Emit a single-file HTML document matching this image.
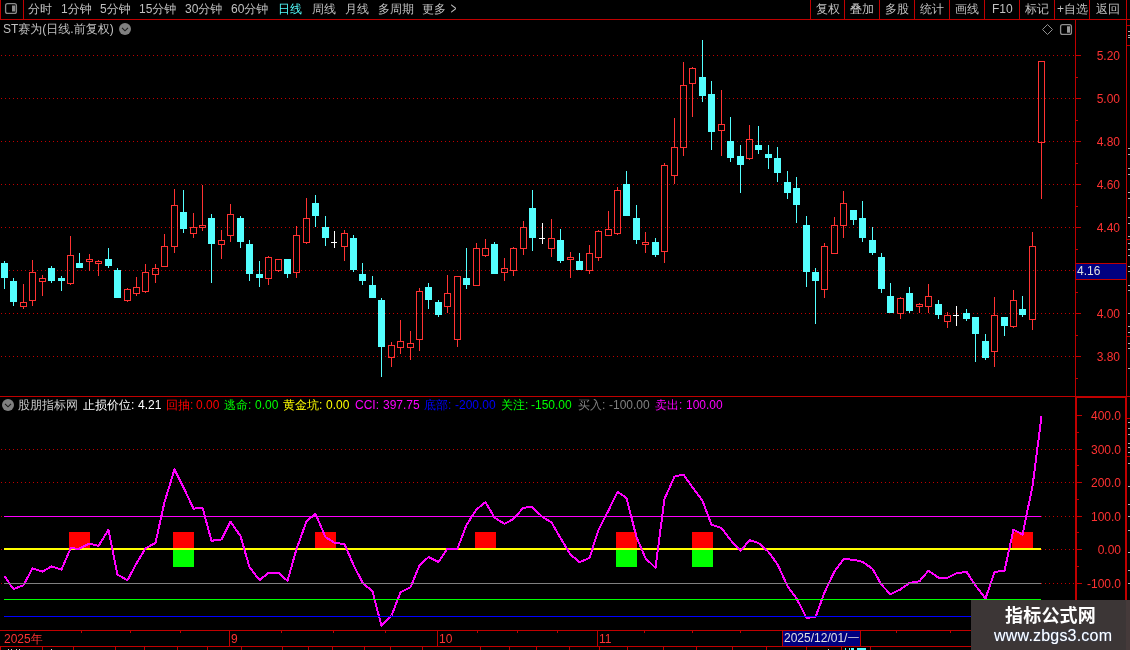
<!DOCTYPE html>
<html lang="zh-CN"><head><meta charset="utf-8"><title>ST赛为 日线</title>
<style>
html,body{margin:0;padding:0;background:#000;}
#w{will-change:transform;position:relative;width:1130px;height:650px;overflow:hidden;background:#000;font-family:"Liberation Sans","WenQuanYi Zen Hei","Noto Sans CJK SC",sans-serif;}
.t{position:absolute;font-size:12px;line-height:16px;white-space:nowrap;letter-spacing:0;}
.r{text-align:right;}
#wm{position:absolute;left:971px;top:600px;width:159px;height:50px;background:#3c3636;font-family:"Liberation Sans","Noto Sans CJK SC",sans-serif;}
#wm .a{position:absolute;left:0;width:159px;top:3px;text-align:center;color:#fff;font-weight:bold;font-size:18px;line-height:26px;letter-spacing:0.2px;}
#wm .c{position:absolute;left:155px;top:0;width:4px;height:50px;background:#453a3a;}
#wm .b{position:absolute;left:23px;top:26px;color:#fff;font-size:16px;line-height:20px;letter-spacing:0.2px;text-shadow:0 0 1px rgba(90,143,224,.85);}
</style></head><body><div id="w">
<svg width="1130" height="650" viewBox="0 0 1130 650" style="position:absolute;left:0;top:0" shape-rendering="crispEdges">
<line x1="1" y1="55.5" x2="1075" y2="55.5" stroke="#c00000" stroke-width="1" stroke-dasharray="1 3"/>
<line x1="1" y1="98.5" x2="1075" y2="98.5" stroke="#c00000" stroke-width="1" stroke-dasharray="1 3"/>
<line x1="1" y1="141.5" x2="1075" y2="141.5" stroke="#c00000" stroke-width="1" stroke-dasharray="1 3"/>
<line x1="1" y1="184.5" x2="1075" y2="184.5" stroke="#c00000" stroke-width="1" stroke-dasharray="1 3"/>
<line x1="1" y1="227.5" x2="1075" y2="227.5" stroke="#c00000" stroke-width="1" stroke-dasharray="1 3"/>
<line x1="1" y1="270.5" x2="1075" y2="270.5" stroke="#c00000" stroke-width="1" stroke-dasharray="1 3"/>
<line x1="1" y1="313.5" x2="1075" y2="313.5" stroke="#c00000" stroke-width="1" stroke-dasharray="1 3"/>
<line x1="1" y1="356.5" x2="1075" y2="356.5" stroke="#c00000" stroke-width="1" stroke-dasharray="1 3"/>
<line x1="1" y1="449.5" x2="1075" y2="449.5" stroke="#c00000" stroke-width="1" stroke-dasharray="1 3"/>
<line x1="1" y1="482.5" x2="1075" y2="482.5" stroke="#c00000" stroke-width="1" stroke-dasharray="1 3"/>
<line x1="1" y1="516.5" x2="1075" y2="516.5" stroke="#c00000" stroke-width="1" stroke-dasharray="1 3"/>
<line x1="1" y1="549.5" x2="1075" y2="549.5" stroke="#c00000" stroke-width="1" stroke-dasharray="1 3"/>
<line x1="1" y1="583.5" x2="1075" y2="583.5" stroke="#c00000" stroke-width="1" stroke-dasharray="1 3"/>
<rect x="0" y="0" width="1" height="20" fill="#c00000"/>
<rect x="23" y="0" width="1" height="20" fill="#c00000"/>
<rect x="0" y="19" width="1130" height="1" fill="#c00000"/>
<rect x="810" y="0" width="1" height="20" fill="#c00000"/>
<rect x="844" y="0" width="1" height="20" fill="#c00000"/>
<rect x="879" y="0" width="1" height="20" fill="#c00000"/>
<rect x="914" y="0" width="1" height="20" fill="#c00000"/>
<rect x="949" y="0" width="1" height="20" fill="#c00000"/>
<rect x="984" y="0" width="1" height="20" fill="#c00000"/>
<rect x="1019" y="0" width="1" height="20" fill="#c00000"/>
<rect x="1054" y="0" width="1" height="20" fill="#c00000"/>
<rect x="1089" y="0" width="1" height="20" fill="#c00000"/>
<rect x="1126" y="0" width="1" height="396" fill="#c00000"/>
<rect x="1075" y="19" width="1" height="378" fill="#c00000"/>
<rect x="0" y="396" width="1130" height="1" fill="#c00000"/>
<rect x="1075" y="397" width="52" height="1" fill="#c00000"/>
<rect x="1075" y="396" width="2" height="251" fill="#c00000"/>
<rect x="1125" y="396" width="2" height="254" fill="#c00000"/>
<rect x="0" y="630" width="1077" height="1" fill="#c00000"/>
<rect x="0" y="646" width="1130" height="1" fill="#c00000"/>
<rect x="229" y="630" width="1" height="16" fill="#c00000"/>
<rect x="437" y="630" width="1" height="16" fill="#c00000"/>
<rect x="597" y="630" width="1" height="16" fill="#c00000"/>
<rect x="81" y="630" width="1" height="3" fill="#c00000"/>
<rect x="130" y="630" width="1" height="3" fill="#c00000"/>
<rect x="180" y="630" width="1" height="3" fill="#c00000"/>
<rect x="281" y="630" width="1" height="3" fill="#c00000"/>
<rect x="333" y="630" width="1" height="3" fill="#c00000"/>
<rect x="385" y="630" width="1" height="3" fill="#c00000"/>
<rect x="477" y="630" width="1" height="3" fill="#c00000"/>
<rect x="517" y="630" width="1" height="3" fill="#c00000"/>
<rect x="557" y="630" width="1" height="3" fill="#c00000"/>
<rect x="644" y="630" width="1" height="3" fill="#c00000"/>
<rect x="692" y="630" width="1" height="3" fill="#c00000"/>
<rect x="740" y="630" width="1" height="3" fill="#c00000"/>
<rect x="896" y="630" width="1" height="3" fill="#c00000"/>
<rect x="950" y="630" width="1" height="3" fill="#c00000"/>
<rect x="1004" y="630" width="1" height="3" fill="#c00000"/>
<rect x="1041" y="630" width="1" height="3" fill="#c00000"/>
<rect x="0" y="646" width="1" height="4" fill="#c00000"/>
<rect x="42" y="646" width="1" height="4" fill="#c00000"/>
<rect x="73" y="646" width="1" height="4" fill="#c00000"/>
<rect x="115" y="646" width="1" height="4" fill="#c00000"/>
<rect x="144" y="646" width="1" height="4" fill="#c00000"/>
<rect x="177" y="646" width="1" height="4" fill="#c00000"/>
<rect x="207" y="646" width="1" height="4" fill="#c00000"/>
<rect x="241" y="646" width="1" height="4" fill="#c00000"/>
<rect x="282" y="646" width="1" height="4" fill="#c00000"/>
<rect x="308" y="646" width="1" height="4" fill="#c00000"/>
<rect x="332" y="646" width="1" height="4" fill="#c00000"/>
<rect x="364" y="646" width="1" height="4" fill="#c00000"/>
<rect x="390" y="646" width="1" height="4" fill="#c00000"/>
<rect x="422" y="646" width="1" height="4" fill="#c00000"/>
<rect x="480" y="646" width="1" height="4" fill="#c00000"/>
<rect x="509" y="646" width="1" height="4" fill="#c00000"/>
<rect x="536" y="646" width="1" height="4" fill="#c00000"/>
<rect x="569" y="646" width="1" height="4" fill="#c00000"/>
<rect x="599" y="646" width="1" height="4" fill="#c00000"/>
<rect x="627" y="646" width="1" height="4" fill="#c00000"/>
<rect x="663" y="646" width="1" height="4" fill="#c00000"/>
<rect x="696" y="646" width="1" height="4" fill="#c00000"/>
<rect x="732" y="646" width="1" height="4" fill="#c00000"/>
<rect x="766" y="646" width="1" height="4" fill="#c00000"/>
<rect x="806" y="646" width="1" height="4" fill="#c00000"/>
<rect x="841" y="646" width="1" height="4" fill="#c00000"/>
<rect x="870" y="646" width="1" height="4" fill="#c00000"/>
<rect x="8" y="649" width="1" height="1" fill="#d0d0d0"/>
<rect x="11" y="649" width="1" height="1" fill="#d0d0d0"/>
<rect x="16" y="649" width="1" height="1" fill="#d0d0d0"/>
<rect x="19" y="649" width="1" height="1" fill="#d0d0d0"/>
<rect x="51" y="649" width="1" height="1" fill="#d0d0d0"/>
<rect x="828" y="649" width="1" height="1" fill="#d0d0d0"/>
<rect x="845" y="648" width="1" height="2" fill="#54ffff"/>
<rect x="849" y="648" width="1" height="2" fill="#54ffff"/>
<rect x="851" y="648" width="3" height="2" fill="#54ffff"/>
<rect x="857" y="648" width="9" height="2" fill="#54ffff"/>
<rect x="1076" y="55" width="5" height="1" fill="#c00000"/>
<rect x="1076" y="98" width="5" height="1" fill="#c00000"/>
<rect x="1076" y="141" width="5" height="1" fill="#c00000"/>
<rect x="1076" y="184" width="5" height="1" fill="#c00000"/>
<rect x="1076" y="227" width="5" height="1" fill="#c00000"/>
<rect x="1076" y="270" width="5" height="1" fill="#c00000"/>
<rect x="1076" y="313" width="5" height="1" fill="#c00000"/>
<rect x="1076" y="356" width="5" height="1" fill="#c00000"/>
<rect x="1076" y="77" width="2" height="1" fill="#c00000"/>
<rect x="1076" y="120" width="2" height="1" fill="#c00000"/>
<rect x="1076" y="163" width="2" height="1" fill="#c00000"/>
<rect x="1076" y="206" width="2" height="1" fill="#c00000"/>
<rect x="1076" y="249" width="2" height="1" fill="#c00000"/>
<rect x="1076" y="292" width="2" height="1" fill="#c00000"/>
<rect x="1076" y="335" width="2" height="1" fill="#c00000"/>
<rect x="1076" y="378" width="2" height="1" fill="#c00000"/>
<rect x="1077" y="415" width="5" height="1" fill="#c00000"/>
<rect x="1077" y="449" width="5" height="1" fill="#c00000"/>
<rect x="1077" y="482" width="5" height="1" fill="#c00000"/>
<rect x="1077" y="516" width="5" height="1" fill="#c00000"/>
<rect x="1077" y="549" width="5" height="1" fill="#c00000"/>
<rect x="1077" y="583" width="5" height="1" fill="#c00000"/>
<rect x="1077" y="432" width="2" height="1" fill="#c00000"/>
<rect x="1077" y="465" width="2" height="1" fill="#c00000"/>
<rect x="1077" y="499" width="2" height="1" fill="#c00000"/>
<rect x="1077" y="532" width="2" height="1" fill="#c00000"/>
<rect x="1077" y="566" width="2" height="1" fill="#c00000"/>
<rect x="1127" y="25" width="3" height="1" fill="#c00000"/>
<rect x="1127" y="45" width="3" height="1" fill="#c00000"/>
<rect x="1127" y="239" width="3" height="1" fill="#c00000"/>
<rect x="1127" y="336" width="3" height="1" fill="#c00000"/>
<rect x="1127" y="418" width="3" height="1" fill="#c00000"/>
<rect x="1127" y="456" width="3" height="1" fill="#c00000"/>
<rect x="1128" y="31" width="2" height="1" fill="#b0b0b0"/>
<rect x="1128" y="35" width="2" height="1" fill="#b0b0b0"/>
<rect x="1128" y="37" width="2" height="1" fill="#b0b0b0"/>
<rect x="1128" y="148" width="2" height="1" fill="#b0b0b0"/>
<rect x="1128" y="154" width="2" height="1" fill="#b0b0b0"/>
<rect x="1128" y="168" width="2" height="1" fill="#b0b0b0"/>
<rect x="1128" y="174" width="2" height="1" fill="#b0b0b0"/>
<rect x="1128" y="192" width="2" height="1" fill="#b0b0b0"/>
<rect x="1128" y="198" width="2" height="1" fill="#b0b0b0"/>
<rect x="1128" y="217" width="2" height="1" fill="#b0b0b0"/>
<rect x="1128" y="223" width="2" height="1" fill="#b0b0b0"/>
<rect x="1128" y="236" width="2" height="1" fill="#b0b0b0"/>
<rect x="1128" y="243" width="2" height="1" fill="#b0b0b0"/>
<rect x="1128" y="249" width="2" height="1" fill="#b0b0b0"/>
<rect x="1128" y="255" width="2" height="1" fill="#b0b0b0"/>
<rect x="1128" y="266" width="2" height="1" fill="#b0b0b0"/>
<rect x="1128" y="271" width="2" height="1" fill="#b0b0b0"/>
<rect x="1128" y="285" width="2" height="1" fill="#b0b0b0"/>
<rect x="1128" y="290" width="2" height="1" fill="#b0b0b0"/>
<rect x="1128" y="313" width="2" height="1" fill="#b0b0b0"/>
<rect x="1128" y="326" width="2" height="1" fill="#b0b0b0"/>
<rect x="1128" y="332" width="2" height="1" fill="#b0b0b0"/>
<rect x="1128" y="343" width="2" height="1" fill="#b0b0b0"/>
<rect x="1128" y="348" width="2" height="1" fill="#b0b0b0"/>
<rect x="1128" y="368" width="2" height="1" fill="#b0b0b0"/>
<rect x="1128" y="422" width="2" height="1" fill="#b0b0b0"/>
<rect x="1128" y="428" width="2" height="1" fill="#b0b0b0"/>
<rect x="1128" y="434" width="2" height="1" fill="#b0b0b0"/>
<rect x="1128" y="443" width="2" height="1" fill="#b0b0b0"/>
<rect x="1128" y="447" width="2" height="1" fill="#b0b0b0"/>
<rect x="1128" y="452" width="2" height="1" fill="#b0b0b0"/>
<rect x="1128" y="463" width="2" height="1" fill="#b0b0b0"/>
<rect x="1128" y="486" width="2" height="1" fill="#b0b0b0"/>
<rect x="1128" y="504" width="2" height="1" fill="#b0b0b0"/>
<rect x="1128" y="516" width="2" height="1" fill="#b0b0b0"/>
<rect x="1128" y="530" width="2" height="1" fill="#b0b0b0"/>
<rect x="1128" y="552" width="2" height="1" fill="#b0b0b0"/>
<rect x="1128" y="570" width="2" height="1" fill="#b0b0b0"/>
<rect x="1128" y="583" width="2" height="1" fill="#b0b0b0"/>
<rect x="1076" y="264" width="50" height="15" fill="#000080"/>
<rect x="1076" y="263" width="50" height="1" fill="#c00000"/>
<rect x="1076" y="279" width="50" height="1" fill="#c00000"/>
<rect x="4.0" y="261" width="1" height="28" fill="#54ffff"/>
<rect x="1.0" y="263" width="7" height="15" fill="#54ffff"/>
<rect x="13.0" y="278" width="1" height="28" fill="#54ffff"/>
<rect x="10.0" y="281" width="7" height="21" fill="#54ffff"/>
<rect x="23.0" y="284" width="1" height="18" fill="#ff3232"/>
<rect x="23.0" y="307" width="1" height="2" fill="#ff3232"/>
<rect x="20.5" y="302.5" width="6" height="4" fill="none" stroke="#ff3232" stroke-width="1"/>
<rect x="32.0" y="260" width="1" height="12" fill="#ff3232"/>
<rect x="32.0" y="301" width="1" height="5" fill="#ff3232"/>
<rect x="29.5" y="272.5" width="6" height="28" fill="none" stroke="#ff3232" stroke-width="1"/>
<rect x="42.0" y="275" width="1" height="3" fill="#ff3232"/>
<rect x="42.0" y="282" width="1" height="14" fill="#ff3232"/>
<rect x="39.5" y="278.5" width="6" height="3" fill="none" stroke="#ff3232" stroke-width="1"/>
<rect x="51.0" y="266" width="1" height="17" fill="#54ffff"/>
<rect x="48.0" y="268" width="7" height="13" fill="#54ffff"/>
<rect x="61.0" y="276" width="1" height="15" fill="#54ffff"/>
<rect x="58.0" y="278" width="7" height="3" fill="#54ffff"/>
<rect x="70.0" y="236" width="1" height="19" fill="#ff3232"/>
<rect x="70.0" y="284" width="1" height="1" fill="#ff3232"/>
<rect x="67.5" y="255.5" width="6" height="28" fill="none" stroke="#ff3232" stroke-width="1"/>
<rect x="79.0" y="253" width="1" height="15" fill="#54ffff"/>
<rect x="76.0" y="263" width="7" height="5" fill="#54ffff"/>
<rect x="89.0" y="254" width="1" height="5" fill="#ff3232"/>
<rect x="89.0" y="262" width="1" height="9" fill="#ff3232"/>
<rect x="86.5" y="259.5" width="6" height="2" fill="none" stroke="#ff3232" stroke-width="1"/>
<rect x="98.0" y="260" width="1" height="1" fill="#ff3232"/>
<rect x="98.0" y="264" width="1" height="12" fill="#ff3232"/>
<rect x="95.5" y="261.5" width="6" height="2" fill="none" stroke="#ff3232" stroke-width="1"/>
<rect x="108.0" y="248" width="1" height="20" fill="#54ffff"/>
<rect x="105.0" y="259" width="7" height="7" fill="#54ffff"/>
<rect x="117.0" y="268" width="1" height="30" fill="#54ffff"/>
<rect x="114.0" y="270" width="7" height="28" fill="#54ffff"/>
<rect x="127.0" y="288" width="1" height="1" fill="#ff3232"/>
<rect x="127.0" y="301" width="1" height="1" fill="#ff3232"/>
<rect x="124.5" y="289.5" width="6" height="11" fill="none" stroke="#ff3232" stroke-width="1"/>
<rect x="136.0" y="277" width="1" height="10" fill="#ff3232"/>
<rect x="136.0" y="294" width="1" height="2" fill="#ff3232"/>
<rect x="133.5" y="287.5" width="6" height="6" fill="none" stroke="#ff3232" stroke-width="1"/>
<rect x="145.0" y="264" width="1" height="8" fill="#ff3232"/>
<rect x="145.0" y="292" width="1" height="1" fill="#ff3232"/>
<rect x="142.5" y="272.5" width="6" height="19" fill="none" stroke="#ff3232" stroke-width="1"/>
<rect x="155.0" y="264" width="1" height="4" fill="#ff3232"/>
<rect x="155.0" y="275" width="1" height="8" fill="#ff3232"/>
<rect x="152.5" y="268.5" width="6" height="6" fill="none" stroke="#ff3232" stroke-width="1"/>
<rect x="164.0" y="234" width="1" height="12" fill="#ff3232"/>
<rect x="161.5" y="246.5" width="6" height="20" fill="none" stroke="#ff3232" stroke-width="1"/>
<rect x="174.0" y="189" width="1" height="16" fill="#ff3232"/>
<rect x="174.0" y="247" width="1" height="6" fill="#ff3232"/>
<rect x="171.5" y="205.5" width="6" height="41" fill="none" stroke="#ff3232" stroke-width="1"/>
<rect x="183.0" y="190" width="1" height="43" fill="#54ffff"/>
<rect x="180.0" y="212" width="7" height="17" fill="#54ffff"/>
<rect x="193.0" y="213" width="1" height="14" fill="#ff3232"/>
<rect x="193.0" y="234" width="1" height="4" fill="#ff3232"/>
<rect x="190.5" y="227.5" width="6" height="6" fill="none" stroke="#ff3232" stroke-width="1"/>
<rect x="202.0" y="185" width="1" height="40" fill="#ff3232"/>
<rect x="202.0" y="228" width="1" height="3" fill="#ff3232"/>
<rect x="199.5" y="225.5" width="6" height="2" fill="none" stroke="#ff3232" stroke-width="1"/>
<rect x="211.0" y="214" width="1" height="69" fill="#54ffff"/>
<rect x="208.0" y="218" width="7" height="26" fill="#54ffff"/>
<rect x="221.0" y="230" width="1" height="10" fill="#ff3232"/>
<rect x="221.0" y="245" width="1" height="14" fill="#ff3232"/>
<rect x="218.5" y="240.5" width="6" height="4" fill="none" stroke="#ff3232" stroke-width="1"/>
<rect x="230.0" y="204" width="1" height="10" fill="#ff3232"/>
<rect x="230.0" y="236" width="1" height="6" fill="#ff3232"/>
<rect x="227.5" y="214.5" width="6" height="21" fill="none" stroke="#ff3232" stroke-width="1"/>
<rect x="240.0" y="216" width="1" height="32" fill="#54ffff"/>
<rect x="237.0" y="218" width="7" height="24" fill="#54ffff"/>
<rect x="249.0" y="240" width="1" height="41" fill="#54ffff"/>
<rect x="246.0" y="244" width="7" height="30" fill="#54ffff"/>
<rect x="259.0" y="261" width="1" height="26" fill="#54ffff"/>
<rect x="256.0" y="274" width="7" height="4" fill="#54ffff"/>
<rect x="268.0" y="256" width="1" height="1" fill="#ff3232"/>
<rect x="268.0" y="279" width="1" height="6" fill="#ff3232"/>
<rect x="265.5" y="257.5" width="6" height="21" fill="none" stroke="#ff3232" stroke-width="1"/>
<rect x="278.0" y="271" width="1" height="1" fill="#ff3232"/>
<rect x="275.5" y="259.5" width="6" height="11" fill="none" stroke="#ff3232" stroke-width="1"/>
<rect x="287.0" y="259" width="1" height="19" fill="#54ffff"/>
<rect x="284.0" y="259" width="7" height="15" fill="#54ffff"/>
<rect x="296.0" y="226" width="1" height="9" fill="#ff3232"/>
<rect x="296.0" y="273" width="1" height="5" fill="#ff3232"/>
<rect x="293.5" y="235.5" width="6" height="37" fill="none" stroke="#ff3232" stroke-width="1"/>
<rect x="306.0" y="198" width="1" height="20" fill="#ff3232"/>
<rect x="306.0" y="243" width="1" height="1" fill="#ff3232"/>
<rect x="303.5" y="218.5" width="6" height="24" fill="none" stroke="#ff3232" stroke-width="1"/>
<rect x="315.0" y="195" width="1" height="32" fill="#54ffff"/>
<rect x="312.0" y="203" width="7" height="13" fill="#54ffff"/>
<rect x="325.0" y="216" width="1" height="30" fill="#54ffff"/>
<rect x="322.0" y="227" width="7" height="11" fill="#54ffff"/>
<rect x="334.0" y="231" width="1" height="17" fill="#fff"/>
<rect x="331.0" y="242" width="6" height="1" fill="#fff"/>
<rect x="344.0" y="230" width="1" height="3" fill="#ff3232"/>
<rect x="344.0" y="247" width="1" height="14" fill="#ff3232"/>
<rect x="341.5" y="233.5" width="6" height="13" fill="none" stroke="#ff3232" stroke-width="1"/>
<rect x="353.0" y="235" width="1" height="37" fill="#54ffff"/>
<rect x="350.0" y="238" width="7" height="32" fill="#54ffff"/>
<rect x="362.0" y="263" width="1" height="22" fill="#54ffff"/>
<rect x="359.0" y="274" width="7" height="7" fill="#54ffff"/>
<rect x="372.0" y="276" width="1" height="22" fill="#54ffff"/>
<rect x="369.0" y="285" width="7" height="13" fill="#54ffff"/>
<rect x="381.0" y="298" width="1" height="79" fill="#54ffff"/>
<rect x="378.0" y="300" width="7" height="47" fill="#54ffff"/>
<rect x="391.0" y="342" width="1" height="3" fill="#ff3232"/>
<rect x="391.0" y="358" width="1" height="9" fill="#ff3232"/>
<rect x="388.5" y="345.5" width="6" height="12" fill="none" stroke="#ff3232" stroke-width="1"/>
<rect x="400.0" y="320" width="1" height="21" fill="#ff3232"/>
<rect x="400.0" y="348" width="1" height="6" fill="#ff3232"/>
<rect x="397.5" y="341.5" width="6" height="6" fill="none" stroke="#ff3232" stroke-width="1"/>
<rect x="410.0" y="331" width="1" height="12" fill="#ff3232"/>
<rect x="410.0" y="348" width="1" height="12" fill="#ff3232"/>
<rect x="407.5" y="343.5" width="6" height="4" fill="none" stroke="#ff3232" stroke-width="1"/>
<rect x="419.0" y="288" width="1" height="3" fill="#ff3232"/>
<rect x="419.0" y="340" width="1" height="11" fill="#ff3232"/>
<rect x="416.5" y="291.5" width="6" height="48" fill="none" stroke="#ff3232" stroke-width="1"/>
<rect x="428.0" y="283" width="1" height="26" fill="#54ffff"/>
<rect x="425.0" y="287" width="7" height="13" fill="#54ffff"/>
<rect x="438.0" y="300" width="1" height="17" fill="#54ffff"/>
<rect x="435.0" y="302" width="7" height="13" fill="#54ffff"/>
<rect x="447.0" y="275" width="1" height="18" fill="#ff3232"/>
<rect x="447.0" y="307" width="1" height="6" fill="#ff3232"/>
<rect x="444.5" y="293.5" width="6" height="13" fill="none" stroke="#ff3232" stroke-width="1"/>
<rect x="457.0" y="340" width="1" height="7" fill="#ff3232"/>
<rect x="454.5" y="276.5" width="6" height="63" fill="none" stroke="#ff3232" stroke-width="1"/>
<rect x="466.0" y="248" width="1" height="41" fill="#54ffff"/>
<rect x="463.0" y="278" width="7" height="7" fill="#54ffff"/>
<rect x="476.0" y="243" width="1" height="5" fill="#ff3232"/>
<rect x="473.5" y="248.5" width="6" height="37" fill="none" stroke="#ff3232" stroke-width="1"/>
<rect x="485.0" y="239" width="1" height="9" fill="#ff3232"/>
<rect x="485.0" y="256" width="1" height="1" fill="#ff3232"/>
<rect x="482.5" y="248.5" width="6" height="7" fill="none" stroke="#ff3232" stroke-width="1"/>
<rect x="494.0" y="242" width="1" height="32" fill="#54ffff"/>
<rect x="491.0" y="244" width="7" height="30" fill="#54ffff"/>
<rect x="504.0" y="258" width="1" height="10" fill="#ff3232"/>
<rect x="504.0" y="273" width="1" height="8" fill="#ff3232"/>
<rect x="501.5" y="268.5" width="6" height="4" fill="none" stroke="#ff3232" stroke-width="1"/>
<rect x="513.0" y="247" width="1" height="1" fill="#ff3232"/>
<rect x="513.0" y="271" width="1" height="5" fill="#ff3232"/>
<rect x="510.5" y="248.5" width="6" height="22" fill="none" stroke="#ff3232" stroke-width="1"/>
<rect x="523.0" y="221" width="1" height="6" fill="#ff3232"/>
<rect x="523.0" y="249" width="1" height="6" fill="#ff3232"/>
<rect x="520.5" y="227.5" width="6" height="21" fill="none" stroke="#ff3232" stroke-width="1"/>
<rect x="532.0" y="190" width="1" height="61" fill="#54ffff"/>
<rect x="529.0" y="208" width="7" height="30" fill="#54ffff"/>
<rect x="542.0" y="223" width="1" height="21" fill="#fff"/>
<rect x="539.0" y="238" width="6" height="1" fill="#fff"/>
<rect x="551.0" y="219" width="1" height="19" fill="#ff3232"/>
<rect x="551.0" y="249" width="1" height="8" fill="#ff3232"/>
<rect x="548.5" y="238.5" width="6" height="10" fill="none" stroke="#ff3232" stroke-width="1"/>
<rect x="560.0" y="229" width="1" height="34" fill="#54ffff"/>
<rect x="557.0" y="240" width="7" height="21" fill="#54ffff"/>
<rect x="570.0" y="252" width="1" height="5" fill="#ff3232"/>
<rect x="570.0" y="260" width="1" height="18" fill="#ff3232"/>
<rect x="567.5" y="257.5" width="6" height="2" fill="none" stroke="#ff3232" stroke-width="1"/>
<rect x="579.0" y="253" width="1" height="17" fill="#54ffff"/>
<rect x="576.0" y="261" width="7" height="9" fill="#54ffff"/>
<rect x="589.0" y="245" width="1" height="8" fill="#ff3232"/>
<rect x="589.0" y="271" width="1" height="3" fill="#ff3232"/>
<rect x="586.5" y="253.5" width="6" height="17" fill="none" stroke="#ff3232" stroke-width="1"/>
<rect x="598.0" y="230" width="1" height="1" fill="#ff3232"/>
<rect x="598.0" y="258" width="1" height="3" fill="#ff3232"/>
<rect x="595.5" y="231.5" width="6" height="26" fill="none" stroke="#ff3232" stroke-width="1"/>
<rect x="608.0" y="211" width="1" height="18" fill="#ff3232"/>
<rect x="605.5" y="229.5" width="6" height="6" fill="none" stroke="#ff3232" stroke-width="1"/>
<rect x="617.0" y="187" width="1" height="3" fill="#ff3232"/>
<rect x="617.0" y="234" width="1" height="1" fill="#ff3232"/>
<rect x="614.5" y="190.5" width="6" height="43" fill="none" stroke="#ff3232" stroke-width="1"/>
<rect x="626.0" y="171" width="1" height="45" fill="#54ffff"/>
<rect x="623.0" y="184" width="7" height="32" fill="#54ffff"/>
<rect x="636.0" y="205" width="1" height="39" fill="#54ffff"/>
<rect x="633.0" y="218" width="7" height="22" fill="#54ffff"/>
<rect x="645.0" y="232" width="1" height="10" fill="#ff3232"/>
<rect x="645.0" y="245" width="1" height="8" fill="#ff3232"/>
<rect x="642.5" y="242.5" width="6" height="2" fill="none" stroke="#ff3232" stroke-width="1"/>
<rect x="655.0" y="238" width="1" height="19" fill="#54ffff"/>
<rect x="652.0" y="242" width="7" height="13" fill="#54ffff"/>
<rect x="664.0" y="163" width="1" height="2" fill="#ff3232"/>
<rect x="664.0" y="252" width="1" height="11" fill="#ff3232"/>
<rect x="661.5" y="165.5" width="6" height="86" fill="none" stroke="#ff3232" stroke-width="1"/>
<rect x="674.0" y="118" width="1" height="29" fill="#ff3232"/>
<rect x="674.0" y="176" width="1" height="8" fill="#ff3232"/>
<rect x="671.5" y="147.5" width="6" height="28" fill="none" stroke="#ff3232" stroke-width="1"/>
<rect x="683.0" y="62" width="1" height="23" fill="#ff3232"/>
<rect x="683.0" y="148" width="1" height="8" fill="#ff3232"/>
<rect x="680.5" y="85.5" width="6" height="62" fill="none" stroke="#ff3232" stroke-width="1"/>
<rect x="692.0" y="67" width="1" height="1" fill="#ff3232"/>
<rect x="692.0" y="84" width="1" height="33" fill="#ff3232"/>
<rect x="689.5" y="68.5" width="6" height="15" fill="none" stroke="#ff3232" stroke-width="1"/>
<rect x="702.0" y="40" width="1" height="62" fill="#54ffff"/>
<rect x="699.0" y="77" width="7" height="19" fill="#54ffff"/>
<rect x="711.0" y="81" width="1" height="69" fill="#54ffff"/>
<rect x="708.0" y="94" width="7" height="38" fill="#54ffff"/>
<rect x="721.0" y="90" width="1" height="34" fill="#ff3232"/>
<rect x="721.0" y="131" width="1" height="25" fill="#ff3232"/>
<rect x="718.5" y="124.5" width="6" height="6" fill="none" stroke="#ff3232" stroke-width="1"/>
<rect x="730.0" y="117" width="1" height="45" fill="#54ffff"/>
<rect x="727.0" y="141" width="7" height="17" fill="#54ffff"/>
<rect x="740.0" y="145" width="1" height="48" fill="#54ffff"/>
<rect x="737.0" y="156" width="7" height="9" fill="#54ffff"/>
<rect x="749.0" y="125" width="1" height="14" fill="#ff3232"/>
<rect x="749.0" y="159" width="1" height="1" fill="#ff3232"/>
<rect x="746.5" y="139.5" width="6" height="19" fill="none" stroke="#ff3232" stroke-width="1"/>
<rect x="758.0" y="126" width="1" height="28" fill="#54ffff"/>
<rect x="755.0" y="145" width="7" height="5" fill="#54ffff"/>
<rect x="768.0" y="145" width="1" height="24" fill="#54ffff"/>
<rect x="765.0" y="154" width="7" height="4" fill="#54ffff"/>
<rect x="777.0" y="147" width="1" height="35" fill="#54ffff"/>
<rect x="774.0" y="158" width="7" height="15" fill="#54ffff"/>
<rect x="787.0" y="171" width="1" height="28" fill="#54ffff"/>
<rect x="784.0" y="182" width="7" height="11" fill="#54ffff"/>
<rect x="796.0" y="177" width="1" height="46" fill="#54ffff"/>
<rect x="793.0" y="188" width="7" height="17" fill="#54ffff"/>
<rect x="806.0" y="216" width="1" height="71" fill="#54ffff"/>
<rect x="803.0" y="225" width="7" height="47" fill="#54ffff"/>
<rect x="815.0" y="268" width="1" height="56" fill="#54ffff"/>
<rect x="812.0" y="272" width="7" height="9" fill="#54ffff"/>
<rect x="824.0" y="243" width="1" height="3" fill="#ff3232"/>
<rect x="824.0" y="290" width="1" height="8" fill="#ff3232"/>
<rect x="821.5" y="246.5" width="6" height="43" fill="none" stroke="#ff3232" stroke-width="1"/>
<rect x="834.0" y="217" width="1" height="8" fill="#ff3232"/>
<rect x="831.5" y="225.5" width="6" height="28" fill="none" stroke="#ff3232" stroke-width="1"/>
<rect x="843.0" y="191" width="1" height="12" fill="#ff3232"/>
<rect x="843.0" y="226" width="1" height="12" fill="#ff3232"/>
<rect x="840.5" y="203.5" width="6" height="22" fill="none" stroke="#ff3232" stroke-width="1"/>
<rect x="853.0" y="210" width="1" height="15" fill="#54ffff"/>
<rect x="850.0" y="210" width="7" height="10" fill="#54ffff"/>
<rect x="862.0" y="201" width="1" height="41" fill="#54ffff"/>
<rect x="859.0" y="218" width="7" height="20" fill="#54ffff"/>
<rect x="872.0" y="227" width="1" height="28" fill="#54ffff"/>
<rect x="869.0" y="240" width="7" height="13" fill="#54ffff"/>
<rect x="881.0" y="253" width="1" height="40" fill="#54ffff"/>
<rect x="878.0" y="257" width="7" height="32" fill="#54ffff"/>
<rect x="890.0" y="283" width="1" height="30" fill="#54ffff"/>
<rect x="887.0" y="296" width="7" height="17" fill="#54ffff"/>
<rect x="900.0" y="297" width="1" height="1" fill="#ff3232"/>
<rect x="900.0" y="314" width="1" height="5" fill="#ff3232"/>
<rect x="897.5" y="298.5" width="6" height="15" fill="none" stroke="#ff3232" stroke-width="1"/>
<rect x="909.0" y="287" width="1" height="26" fill="#54ffff"/>
<rect x="906.0" y="293" width="7" height="18" fill="#54ffff"/>
<rect x="919.0" y="303" width="1" height="1" fill="#ff3232"/>
<rect x="919.0" y="307" width="1" height="6" fill="#ff3232"/>
<rect x="916.5" y="304.5" width="6" height="2" fill="none" stroke="#ff3232" stroke-width="1"/>
<rect x="928.0" y="284" width="1" height="12" fill="#ff3232"/>
<rect x="928.0" y="307" width="1" height="6" fill="#ff3232"/>
<rect x="925.5" y="296.5" width="6" height="10" fill="none" stroke="#ff3232" stroke-width="1"/>
<rect x="938.0" y="300" width="1" height="19" fill="#54ffff"/>
<rect x="935.0" y="304" width="7" height="11" fill="#54ffff"/>
<rect x="947.0" y="312" width="1" height="3" fill="#ff3232"/>
<rect x="947.0" y="322" width="1" height="6" fill="#ff3232"/>
<rect x="944.5" y="315.5" width="6" height="6" fill="none" stroke="#ff3232" stroke-width="1"/>
<rect x="956.0" y="306" width="1" height="20" fill="#fff"/>
<rect x="953.0" y="315" width="6" height="1" fill="#fff"/>
<rect x="966.0" y="309" width="1" height="12" fill="#54ffff"/>
<rect x="963.0" y="313" width="7" height="6" fill="#54ffff"/>
<rect x="975.0" y="317" width="1" height="45" fill="#54ffff"/>
<rect x="972.0" y="317" width="7" height="17" fill="#54ffff"/>
<rect x="985.0" y="334" width="1" height="26" fill="#54ffff"/>
<rect x="982.0" y="341" width="7" height="17" fill="#54ffff"/>
<rect x="994.0" y="297" width="1" height="18" fill="#ff3232"/>
<rect x="994.0" y="352" width="1" height="15" fill="#ff3232"/>
<rect x="991.5" y="315.5" width="6" height="36" fill="none" stroke="#ff3232" stroke-width="1"/>
<rect x="1004.0" y="317" width="1" height="19" fill="#54ffff"/>
<rect x="1001.0" y="317" width="7" height="9" fill="#54ffff"/>
<rect x="1013.0" y="290" width="1" height="10" fill="#ff3232"/>
<rect x="1013.0" y="327" width="1" height="1" fill="#ff3232"/>
<rect x="1010.5" y="300.5" width="6" height="26" fill="none" stroke="#ff3232" stroke-width="1"/>
<rect x="1022.0" y="296" width="1" height="21" fill="#54ffff"/>
<rect x="1019.0" y="309" width="7" height="6" fill="#54ffff"/>
<rect x="1032.0" y="232" width="1" height="14" fill="#ff3232"/>
<rect x="1032.0" y="320" width="1" height="10" fill="#ff3232"/>
<rect x="1029.5" y="246.5" width="6" height="73" fill="none" stroke="#ff3232" stroke-width="1"/>
<rect x="1041.0" y="143" width="1" height="56" fill="#ff3232"/>
<rect x="1038.5" y="61.5" width="6" height="81" fill="none" stroke="#ff3232" stroke-width="1"/>
<rect x="69" y="532" width="21" height="17" fill="#ff0000"/>
<rect x="173" y="532" width="21" height="17" fill="#ff0000"/>
<rect x="315" y="532" width="21" height="17" fill="#ff0000"/>
<rect x="475" y="532" width="21" height="17" fill="#ff0000"/>
<rect x="616" y="532" width="21" height="17" fill="#ff0000"/>
<rect x="692" y="532" width="21" height="17" fill="#ff0000"/>
<rect x="1012" y="532" width="21" height="17" fill="#ff0000"/>
<rect x="173" y="550" width="21" height="17" fill="#00ff00"/>
<rect x="616" y="550" width="21" height="17" fill="#00ff00"/>
<rect x="692" y="550" width="21" height="17" fill="#00ff00"/>
<rect x="4" y="548" width="1037" height="2" fill="#ffff00"/>
<polyline points="4.5,576.3 13.5,589.1 23.5,585.2 32.5,568.3 42.5,571.6 51.5,566.4 61.5,569.7 70.5,548.4 79.5,548.6 89.5,543.6 98.5,545.9 108.5,529.8 117.5,574.7 127.5,580.2 136.5,563.3 145.5,548.4 155.5,542.8 164.5,502.1 174.5,469.4 183.5,487.4 193.5,508.7 202.5,507.6 211.5,540.8 221.5,539.4 230.5,521.7 240.5,536.1 249.5,567.1 259.5,580.1 268.5,572.9 278.5,572.9 287.5,580.9 296.5,549.1 306.5,521.4 315.5,513.7 325.5,537.2 334.5,542.7 344.5,544.1 353.5,564.9 362.5,582.6 372.5,591.5 381.5,626.0 391.5,615.5 400.5,592.4 410.5,587.3 419.5,565.4 428.5,557.1 438.5,562.1 447.5,548.6 457.5,548.6 466.5,525.0 476.5,509.5 485.5,502.1 494.5,517.6 504.5,523.9 513.5,518.9 523.5,507.6 532.5,507.3 542.5,517.0 551.5,522.3 560.5,538.0 570.5,554.6 579.5,562.1 589.5,558.0 598.5,529.7 608.5,510.4 617.5,491.8 626.5,498.0 636.5,537.2 645.5,558.2 655.5,567.9 664.5,498.9 674.5,476.6 683.5,474.6 692.5,487.4 702.5,500.7 711.5,524.7 721.5,528.1 730.5,540.0 740.5,551.0 749.5,540.2 758.5,543.0 768.5,551.9 777.5,564.3 787.5,586.2 796.5,598.4 806.5,617.7 815.5,617.2 824.5,592.5 834.5,571.3 843.5,559.3 853.5,559.6 862.5,561.8 872.5,568.8 881.5,584.8 890.5,594.3 900.5,589.4 909.5,583.0 919.5,581.2 928.5,570.6 938.5,577.7 947.5,577.7 956.5,573.4 966.5,571.7 975.5,585.5 985.5,598.6 994.5,572.0 1004.5,570.6 1013.5,529.6 1022.5,534.5 1032.5,486.4 1041.5,416.3" fill="none" stroke="#ff00ff" stroke-width="2" stroke-linejoin="round"/>
<rect x="4" y="516" width="1037" height="1" fill="#ff00ff"/>
<rect x="4" y="583" width="1037" height="1" fill="#808080"/>
<rect x="4" y="599" width="1037" height="1" fill="#00ff00"/>
<rect x="4" y="616" width="1037" height="1" fill="#0000ff"/>
<rect x="782" y="630" width="79" height="17" fill="#c00000"/>
<rect x="783" y="631" width="77" height="15" fill="#000080"/>
<g shape-rendering="geometricPrecision">
<rect x="5.6" y="3.6" width="10.8" height="9.8" rx="2" fill="none" stroke="#8a8a8a" stroke-width="1.3"/>
<rect x="12" y="5.5" width="3.3" height="6" fill="#8c8c8c"/>
<rect x="1060.6" y="24.6" width="10.8" height="9.8" rx="2" fill="none" stroke="#8f8f8f" stroke-width="1.3"/>
<rect x="1067" y="26.3" width="3" height="6.4" fill="#9a9a9a"/>
<path d="M1047.5 24.5 L1052.5 29.5 L1047.5 34.5 L1042.5 29.5 Z" fill="none" stroke="#909090" stroke-width="1"/>
<circle cx="125" cy="29" r="6" fill="#808080"/>
<path d="M122 27.8 L125 30.8 L128 27.8" fill="none" stroke="#1a1a1a" stroke-width="1.1"/>
<circle cx="8" cy="405" r="6" fill="#808080"/>
<path d="M5 403.8 L8 406.8 L11 403.8" fill="none" stroke="#1a1a1a" stroke-width="1.1"/>
</g>
</svg>
<span class="t" style="left:28px;top:1px;color:#c0c0c0;">分时</span><span class="t" style="left:61px;top:1px;color:#c0c0c0;">1分钟</span><span class="t" style="left:100px;top:1px;color:#c0c0c0;">5分钟</span><span class="t" style="left:139px;top:1px;color:#c0c0c0;">15分钟</span><span class="t" style="left:185px;top:1px;color:#c0c0c0;">30分钟</span><span class="t" style="left:231px;top:1px;color:#c0c0c0;">60分钟</span><span class="t" style="left:312px;top:1px;color:#c0c0c0;">周线</span><span class="t" style="left:345px;top:1px;color:#c0c0c0;">月线</span><span class="t" style="left:378px;top:1px;color:#c0c0c0;">多周期</span><span class="t" style="left:422px;top:1px;color:#c0c0c0;">更多</span><span class="t" style="left:278px;top:1px;color:#54ffff;">日线</span><span class="t" style="left:449.5px;top:1px;color:#c0c0c0;transform:scale(0.8,1.3);transform-origin:50% 55%;">&gt;</span><span class="t" style="left:816px;top:1px;color:#c0c0c0;">复权</span><span class="t" style="left:850px;top:1px;color:#c0c0c0;">叠加</span><span class="t" style="left:885px;top:1px;color:#c0c0c0;">多股</span><span class="t" style="left:920px;top:1px;color:#c0c0c0;">统计</span><span class="t" style="left:955px;top:1px;color:#c0c0c0;">画线</span><span class="t" style="left:992px;top:1px;color:#c0c0c0;">F10</span><span class="t" style="left:1025px;top:1px;color:#c0c0c0;">标记</span><span class="t" style="left:1057px;top:1px;color:#c0c0c0;">+自选</span><span class="t" style="left:1096px;top:1px;color:#c0c0c0;">返回</span><span class="t" style="left:3px;top:21px;color:#c0c0c0;">ST赛为(日线.前复权)</span><span class="t" style="left:18px;top:397px;color:#c8c8c8;">股朋指标网</span><span class="t" style="left:83px;top:397px;color:#ffffff;">止损价位:</span><span class="t" style="left:138px;top:397px;color:#ffffff;">4.21</span><span class="t" style="left:166px;top:397px;color:#ff0000;">回抽:</span><span class="t" style="left:196px;top:397px;color:#ff0000;">0.00</span><span class="t" style="left:224px;top:397px;color:#00ff00;">逃命:</span><span class="t" style="left:255px;top:397px;color:#00ff00;">0.00</span><span class="t" style="left:283px;top:397px;color:#ffff00;">黄金坑:</span><span class="t" style="left:326px;top:397px;color:#ffff00;">0.00</span><span class="t" style="left:355px;top:397px;color:#ff00ff;">CCI:</span><span class="t" style="left:383px;top:397px;color:#ff00ff;">397.75</span><span class="t" style="left:424px;top:397px;color:#0000ff;">底部:</span><span class="t" style="left:455px;top:397px;color:#0000ff;">-200.00</span><span class="t" style="left:501px;top:397px;color:#00ff00;">关注:</span><span class="t" style="left:531px;top:397px;color:#00ff00;">-150.00</span><span class="t" style="left:578px;top:397px;color:#808080;">买入:</span><span class="t" style="left:609px;top:397px;color:#808080;">-100.00</span><span class="t" style="left:655px;top:397px;color:#ff00ff;">卖出:</span><span class="t" style="left:686px;top:397px;color:#ff00ff;">100.00</span><span class="t r" style="right:10px;top:48px;color:#ff3232">5.20</span><span class="t r" style="right:10px;top:91px;color:#ff3232">5.00</span><span class="t r" style="right:10px;top:134px;color:#ff3232">4.80</span><span class="t r" style="right:10px;top:177px;color:#ff3232">4.60</span><span class="t r" style="right:10px;top:220px;color:#ff3232">4.40</span><span class="t r" style="right:10px;top:306px;color:#ff3232">4.00</span><span class="t r" style="right:10px;top:349px;color:#ff3232">3.80</span><span class="t" style="left:1077px;top:263px;color:#e0e0e0;">4.16</span><span class="t r" style="right:9px;top:408px;color:#ff3232">400.0</span><span class="t r" style="right:9px;top:442px;color:#ff3232">300.0</span><span class="t r" style="right:9px;top:475px;color:#ff3232">200.0</span><span class="t r" style="right:9px;top:509px;color:#ff3232">100.0</span><span class="t r" style="right:9px;top:542px;color:#ff3232">0.00</span><span class="t r" style="right:9px;top:576px;color:#ff3232">-100.0</span><span class="t" style="left:4px;top:631px;color:#ff3232;">2025年</span><span class="t" style="left:231px;top:631px;color:#ff3232;">9</span><span class="t" style="left:439px;top:631px;color:#ff3232;">10</span><span class="t" style="left:599px;top:631px;color:#ff3232;">11</span><span class="t" style="left:784px;top:630px;color:#e0e0e0;">2025/12/01/一</span>
<div id="wm"><div class="c"></div><div class="a">指标公式网</div><div class="b">www.zbgs3.com</div></div>
</div></body></html>
